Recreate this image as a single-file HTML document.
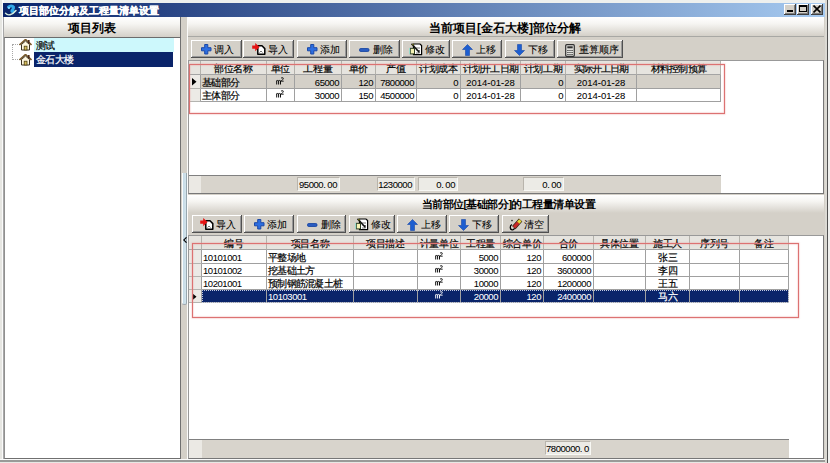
<!DOCTYPE html><html><head><meta charset="utf-8"><style>
*{margin:0;padding:0;box-sizing:border-box}
html,body{width:830px;height:463px;overflow:hidden;background:#d4d0c8;font-family:"Liberation Sans",sans-serif;font-size:10px;color:#000;-webkit-text-stroke-width:0.2px}
.hdr{-webkit-text-stroke-width:0}
.a{position:absolute}
.t{white-space:nowrap}
.wb{position:absolute;top:4px;width:12px;height:11px;background:#d4d0c8;box-shadow:inset -1px -1px #404040,inset 1px 1px #fff,inset -2px -2px #808080}
.hdr{position:absolute;background:linear-gradient(to bottom,#ffffff 0%,#f6f5f2 35%,#d4d0c8 100%);font-weight:bold;text-align:center;white-space:nowrap}
.btn{position:absolute;background:#d4d0c8;box-shadow:inset -1px -1px #505050,inset 1px 1px #fff,inset -2px -2px #989898;font-size:10px;white-space:nowrap;-webkit-text-stroke-width:0.05px}
.btn svg{position:absolute;left:0;top:0}
.btn span{position:absolute}
.cell{position:absolute;white-space:nowrap;overflow:hidden;font-size:10px}
.hc{background:#e6e4df;border-right:1px solid #b4b2ac;border-bottom:1px solid #a4a4a4;text-align:center}
.ic{background:#eceae6;border-right:1px solid #a0a0a0;border-bottom:1px solid #b4b4b0}
.dc{border-right:1px solid #a0a0a0;border-bottom:1px solid #a0a0a0;letter-spacing:-0.75px}
.num{letter-spacing:-0.45px;font-size:9.5px;-webkit-text-stroke-width:0.05px}
</style></head><body>
<div class="a" style="left:0px;top:0px;width:830px;height:3px;background:#eef0ee"></div>
<div class="a" style="left:0px;top:0px;width:2px;height:463px;background:#e6e6e2"></div>
<div class="a" style="left:2px;top:0px;width:2px;height:463px;background:#fafafa"></div>
<div class="a" style="left:0px;top:459px;width:830px;height:1px;background:#fafafa"></div>
<div class="a" style="left:0px;top:460px;width:830px;height:2px;background:#9a9a98"></div>
<div class="a" style="left:0px;top:462px;width:830px;height:1px;background:#e8e8e4"></div>
<div class="a" style="left:825px;top:0px;width:2px;height:463px;background:#dcdad4"></div>
<div class="a" style="left:827px;top:0px;width:1px;height:463px;background:#505050"></div>
<div class="a" style="left:828px;top:0px;width:2px;height:463px;background:#f0f0ee"></div>
<div class="a" style="left:3px;top:3px;width:822px;height:14px;background:linear-gradient(to right,#0a246a 0%,#a6caf0 100%)"></div>
<svg class="a" style="left:4px;top:4px" width="13" height="12" viewBox="0 0 13 12"><defs><filter id="bl" x="-50%" y="-50%" width="200%" height="200%"><feGaussianBlur stdDeviation="0.7"/></filter></defs><g filter="url(#bl)"><path d="M4.5 3 C6 1.5 8.5 1.5 9.5 3 C10 4.5 8.5 5.5 8 6.5 C7.5 7.5 8.5 8 9.5 7.5" stroke="#30a8e8" stroke-width="3" fill="none" stroke-linecap="round"/></g><circle cx="5" cy="4" r="1" fill="#90e0ff"/><path d="M1.5 9.2 C3.5 12 8 11.5 12 6.5" stroke="#d8efe0" stroke-width="1.4" fill="none" stroke-linecap="round"/></svg>
<div class="a t" style="left:19px;top:3px;width:200px;height:13px;color:#fff;font-weight:bold;font-size:10px;line-height:15px;-webkit-text-stroke-width:0.25px">项目部位分解及工程量清单设置</div>
<div class="wb" style="left:784px;top:4px;width:12px;height:11px;"><div class="a" style="left:3px;top:6px;width:6px;height:2px;background:#000"></div></div>
<div class="wb" style="left:797px;top:4px;width:12px;height:11px;"><div class="a" style="left:2px;top:1px;width:8px;height:7px;border:1px solid #000;border-top-width:2px"></div></div>
<div class="wb" style="left:811px;top:4px;width:12px;height:11px;"><svg class="a" style="left:2px;top:1px" width="8" height="8"><path d="M0.5 0.5 L7.5 7.5 M7.5 0.5 L0.5 7.5" stroke="#000" stroke-width="1.6"/></svg></div>
<div class="a" style="left:3px;top:17px;width:1px;height:442px;background:#a8a8a8"></div>
<div class="hdr" style="left:4px;top:17px;width:176px;height:20px;font-size:12px;line-height:22px">项目列表</div>
<div class="a" style="left:4px;top:37px;width:177px;height:422px;background:#fff;border:1px solid #909090;border-top-color:#6c6c6c;border-right-color:#707070;border-bottom-color:#707070"></div>
<div class="a" style="left:180px;top:17px;width:1px;height:21px;background:#707070"></div>
<div class="a" style="left:187px;top:17px;width:1px;height:442px;background:#fbfbfa"></div>
<div class="a" style="left:34px;top:38px;width:140px;height:14px;background:#cdf8fc"></div>
<div class="a" style="left:34px;top:52px;width:139px;height:15px;background:#0a246a"></div>
<div class="a t" style="left:36px;top:38px;width:60px;height:14px;font-size:10px;line-height:15px;letter-spacing:-0.6px">测试</div>
<div class="a t" style="left:36px;top:52px;width:60px;height:15px;font-size:10px;line-height:16px;color:#fff;letter-spacing:-0.6px">金石大楼</div>
<div class="a" style="left:12px;top:44px;width:1px;height:16px;border-left:1px dotted #a8a8a8"></div>
<div class="a" style="left:12px;top:44px;width:8px;height:1px;border-top:1px dotted #a8a8a8"></div>
<div class="a" style="left:12px;top:59px;width:8px;height:1px;border-top:1px dotted #a8a8a8"></div>
<svg class="a" style="left:19px;top:39px" width="13" height="12" viewBox="0 0 13 12"><path d="M0.5 6 L6.5 0.5 L12.5 6" stroke="#7a5a2a" stroke-width="1.6" fill="none"/><path d="M2.5 5.5 V11 H10.5 V5.5 L6.5 2 Z" fill="#fff8e0" stroke="#3a3020" stroke-width="1"/><rect x="5.2" y="7.2" width="2.8" height="3.8" fill="#d8c060" stroke="#504010" stroke-width="0.8"/><rect x="9" y="1" width="1.6" height="3.5" fill="#4a2a1a"/></svg>
<svg class="a" style="left:19px;top:54px" width="13" height="12" viewBox="0 0 13 12"><path d="M0.5 6 L6.5 0.5 L12.5 6" stroke="#7a5a2a" stroke-width="1.6" fill="none"/><path d="M2.5 5.5 V11 H10.5 V5.5 L6.5 2 Z" fill="#fff8e0" stroke="#3a3020" stroke-width="1"/><rect x="5.2" y="7.2" width="2.8" height="3.8" fill="#d8c060" stroke="#504010" stroke-width="0.8"/><rect x="9" y="1" width="1.6" height="3.5" fill="#4a2a1a"/></svg>
<div class="a" style="left:182px;top:173px;width:5px;height:132px;background:linear-gradient(to right,#fafcfd 0,#fafcfd 1px,#c4dae6 1px,#d4e4ec 100%);border-right:1px solid #98a8b0;border-bottom:1px solid #a0a8b0;border-radius:0 0 2px 2px"></div>
<svg class="a" style="left:183px;top:237px" width="4" height="6"><path d="M3.5 0.3 L0.7 3 L3.5 5.7" stroke="#000" stroke-width="1.1" fill="none"/></svg>
<div class="hdr" style="left:188px;top:17px;width:636px;height:20px;font-size:12px;line-height:22px;padding-right:2px;border-bottom:1px solid #a8a8a4">当前项目[金石大楼]部位分解</div>
<div class="hdr" style="left:188px;top:195px;width:636px;height:18px;font-size:10.5px;line-height:19px;padding-left:5px;letter-spacing:-0.5px">当前部位[基础部分]的工程量清单设置</div>
<div class="btn" style="left:191px;top:40px;width:51px;height:18px"><div class="a" style="left:10px;top:4px"><svg width="12" height="12" viewBox="0 0 12 12"><path d="M3.7 0.5 H6.8 V3.7 H10 V6.8 H6.8 V10 H3.7 V6.8 H0.5 V3.7 H3.7 Z" fill="#2d6ee0" stroke="#1a48a8" stroke-width="1" stroke-linejoin="round"/></svg></div><span style="left:23px;top:4px;line-height:12px">调入</span></div>
<div class="btn" style="left:243px;top:40px;width:51px;height:18px"><div class="a" style="left:9px;top:3px"><svg width="15" height="13" viewBox="0 0 15 13"><path d="M5.8 2.8 H10 L12.8 5.6 V11.3 H5.8 Z" fill="#fff" stroke="#000" stroke-width="1.5" stroke-linejoin="round"/><path d="M7.5 9.5 L9 8 L10.5 9.5" stroke="#555" stroke-width="0.8" fill="none"/><path d="M0.2 2.4 H3.2 V0 L7.6 4.1 L3.2 8.2 V5.8 H0.2 Z" fill="#e41414"/></svg></div><span style="left:25px;top:4px;line-height:12px">导入</span></div>
<div class="btn" style="left:297px;top:40px;width:50px;height:18px"><div class="a" style="left:10px;top:4px"><svg width="12" height="12" viewBox="0 0 12 12"><path d="M3.7 0.5 H6.8 V3.7 H10 V6.8 H6.8 V10 H3.7 V6.8 H0.5 V3.7 H3.7 Z" fill="#2d6ee0" stroke="#1a48a8" stroke-width="1" stroke-linejoin="round"/></svg></div><span style="left:23px;top:4px;line-height:12px">添加</span></div>
<div class="btn" style="left:349px;top:40px;width:51px;height:18px"><div class="a" style="left:10px;top:5px"><svg width="12" height="12" viewBox="0 0 12 12"><rect x="0.5" y="3.5" width="9.5" height="3" rx="1.2" fill="#2a5cc0" stroke="#1040a0" stroke-width="0.8"/></svg></div><span style="left:24px;top:4px;line-height:12px">删除</span></div>
<div class="btn" style="left:402px;top:40px;width:48px;height:18px"><div class="a" style="left:7px;top:3px"><svg width="14" height="13" viewBox="0 0 14 13"><path d="M4.5 1 H11 L12.6 2.6 V11.6 H4.5 Z" fill="#fff" stroke="#000" stroke-width="1.2"/><path d="M6.5 5 H11 M7.5 7.5 H11 M7 10 H10.5" stroke="#555" stroke-width="0.8"/><path d="M2.5 0.8 L10.5 9.5" stroke="#101010" stroke-width="1.6"/><path d="M3.5 1 L4.5 2.2" stroke="#707020" stroke-width="1.5"/><rect x="1.3" y="5.3" width="4.2" height="5.6" fill="#f6f2b4" stroke="#1a2a10" stroke-width="0.9"/><path d="M0.6 5 V11" stroke="#9adccc" stroke-width="1.1"/></svg></div><span style="left:23px;top:4px;line-height:12px">修改</span></div>
<div class="btn" style="left:452px;top:40px;width:50px;height:18px"><div class="a" style="left:10px;top:4px"><svg width="11" height="12" viewBox="0 0 11 12"><path d="M5.5 0.5 L10.5 5.5 H7.5 V11.5 H3.5 V5.5 H0.5 Z" fill="#1d5ed0" stroke="#1848a8" stroke-width="0.6"/></svg></div><span style="left:24px;top:4px;line-height:12px">上移</span></div>
<div class="btn" style="left:505px;top:40px;width:50px;height:18px"><div class="a" style="left:9px;top:4px"><svg width="11" height="12" viewBox="0 0 11 12"><path d="M5.5 11.5 L10.5 6.5 H7.5 V0.5 H3.5 V6.5 H0.5 Z" fill="#1d5ed0" stroke="#1848a8" stroke-width="0.6"/></svg></div><span style="left:23px;top:4px;line-height:12px">下移</span></div>
<div class="btn" style="left:557px;top:40px;width:66px;height:18px"><div class="a" style="left:8px;top:4px"><svg width="10" height="13" viewBox="0 0 10 13"><rect x="0.7" y="0.7" width="8.6" height="11.6" rx="1" fill="#e0e0dc" stroke="#303030" stroke-width="1.2"/><rect x="2.3" y="2.3" width="5.4" height="2" fill="#303030"/><path d="M2.3 6.5 H3.6 M4.4 6.5 H5.6 M6.4 6.5 H7.7 M2.3 8.5 H3.6 M4.4 8.5 H5.6 M6.4 8.5 H7.7 M2.3 10.5 H3.6 M4.4 10.5 H5.6 M6.4 10.5 H7.7" stroke="#303030" stroke-width="1.1"/></svg></div><span style="left:22px;top:4px;line-height:12px">重算顺序</span></div>
<div class="btn" style="left:192px;top:215px;width:50px;height:18px"><div class="a" style="left:8px;top:3px"><svg width="15" height="13" viewBox="0 0 15 13"><path d="M5.8 2.8 H10 L12.8 5.6 V11.3 H5.8 Z" fill="#fff" stroke="#000" stroke-width="1.5" stroke-linejoin="round"/><path d="M7.5 9.5 L9 8 L10.5 9.5" stroke="#555" stroke-width="0.8" fill="none"/><path d="M0.2 2.4 H3.2 V0 L7.6 4.1 L3.2 8.2 V5.8 H0.2 Z" fill="#e41414"/></svg></div><span style="left:24px;top:4px;line-height:12px">导入</span></div>
<div class="btn" style="left:244px;top:215px;width:50px;height:18px"><div class="a" style="left:10px;top:4px"><svg width="12" height="12" viewBox="0 0 12 12"><path d="M3.7 0.5 H6.8 V3.7 H10 V6.8 H6.8 V10 H3.7 V6.8 H0.5 V3.7 H3.7 Z" fill="#2d6ee0" stroke="#1a48a8" stroke-width="1" stroke-linejoin="round"/></svg></div><span style="left:23px;top:4px;line-height:12px">添加</span></div>
<div class="btn" style="left:297px;top:215px;width:49px;height:18px"><div class="a" style="left:10px;top:5px"><svg width="12" height="12" viewBox="0 0 12 12"><rect x="0.5" y="3.5" width="9.5" height="3" rx="1.2" fill="#2a5cc0" stroke="#1040a0" stroke-width="0.8"/></svg></div><span style="left:24px;top:4px;line-height:12px">删除</span></div>
<div class="btn" style="left:349px;top:215px;width:46px;height:18px"><div class="a" style="left:6px;top:3px"><svg width="14" height="13" viewBox="0 0 14 13"><path d="M4.5 1 H11 L12.6 2.6 V11.6 H4.5 Z" fill="#fff" stroke="#000" stroke-width="1.2"/><path d="M6.5 5 H11 M7.5 7.5 H11 M7 10 H10.5" stroke="#555" stroke-width="0.8"/><path d="M2.5 0.8 L10.5 9.5" stroke="#101010" stroke-width="1.6"/><path d="M3.5 1 L4.5 2.2" stroke="#707020" stroke-width="1.5"/><rect x="1.3" y="5.3" width="4.2" height="5.6" fill="#f6f2b4" stroke="#1a2a10" stroke-width="0.9"/><path d="M0.6 5 V11" stroke="#9adccc" stroke-width="1.1"/></svg></div><span style="left:22px;top:4px;line-height:12px">修改</span></div>
<div class="btn" style="left:397px;top:215px;width:50px;height:18px"><div class="a" style="left:10px;top:4px"><svg width="11" height="12" viewBox="0 0 11 12"><path d="M5.5 0.5 L10.5 5.5 H7.5 V11.5 H3.5 V5.5 H0.5 Z" fill="#1d5ed0" stroke="#1848a8" stroke-width="0.6"/></svg></div><span style="left:24px;top:4px;line-height:12px">上移</span></div>
<div class="btn" style="left:449px;top:215px;width:50px;height:18px"><div class="a" style="left:9px;top:4px"><svg width="11" height="12" viewBox="0 0 11 12"><path d="M5.5 11.5 L10.5 6.5 H7.5 V0.5 H3.5 V6.5 H0.5 Z" fill="#1d5ed0" stroke="#1848a8" stroke-width="0.6"/></svg></div><span style="left:23px;top:4px;line-height:12px">下移</span></div>
<div class="btn" style="left:502px;top:215px;width:47px;height:18px"><div class="a" style="left:7px;top:3px"><svg width="14" height="13" viewBox="0 0 14 13"><path d="M4.8 9.6 L11.6 2" stroke="#302010" stroke-width="4.6"/><path d="M5 9.4 L9.5 4.4" stroke="#c82828" stroke-width="3.2"/><path d="M9.3 4.6 L11.4 2.2" stroke="#e8d838" stroke-width="3.2"/><path d="M2.8 6.5 C0.6 8 0.8 11.5 3 11.8 C4.3 12 5.2 11 5.5 10.2" stroke="#000" stroke-width="1.3" fill="none"/><circle cx="3" cy="2.6" r="0.8" fill="#222"/></svg></div><span style="left:22px;top:4px;line-height:12px">清空</span></div>
<div class="a" style="left:188px;top:60px;width:636px;height:134px;background:#fff;border:1px solid #999;border-right-color:#777;border-bottom-color:#777"></div>
<div class="cell hc" style="left:189px;top:61px;width:12px;height:14px;line-height:13px;padding-top:1px;letter-spacing:-0.3px;text-overflow:clip"></div>
<div class="cell hc" style="left:201px;top:61px;width:66px;height:14px;line-height:13px;padding-top:1px;letter-spacing:-0.3px;text-overflow:clip">部位名称</div>
<div class="cell hc" style="left:267px;top:61px;width:28px;height:14px;line-height:13px;padding-top:1px;letter-spacing:-0.3px;text-overflow:clip">单位</div>
<div class="cell hc" style="left:295px;top:61px;width:47px;height:14px;line-height:13px;padding-top:1px;letter-spacing:-0.3px;text-overflow:clip">工程量</div>
<div class="cell hc" style="left:342px;top:61px;width:34px;height:14px;line-height:13px;padding-top:1px;letter-spacing:-0.3px;text-overflow:clip">单价</div>
<div class="cell hc" style="left:376px;top:61px;width:41px;height:14px;line-height:13px;padding-top:1px;letter-spacing:-0.3px;text-overflow:clip">产值</div>
<div class="cell hc" style="left:417px;top:61px;width:44px;height:14px;line-height:13px;padding-top:1px;letter-spacing:-0.3px;text-overflow:clip">计划成本</div>
<div class="cell hc" style="left:461px;top:61px;width:60px;height:14px;line-height:13px;padding-top:1px;letter-spacing:-0.85px;text-overflow:clip">计划开工日期</div>
<div class="cell hc" style="left:521px;top:61px;width:45px;height:14px;line-height:13px;padding-top:1px;letter-spacing:-0.3px;text-overflow:clip">计划工期</div>
<div class="cell hc" style="left:566px;top:61px;width:71px;height:14px;line-height:13px;padding-top:1px;letter-spacing:-0.85px;text-overflow:clip">实际开工日期</div>
<div class="cell hc" style="left:637px;top:61px;width:84px;height:14px;line-height:13px;padding-top:1px;letter-spacing:-0.85px;text-overflow:clip">材料控制预算</div>
<div class="cell ic" style="left:189px;top:75px;width:12px;height:14px"><svg class="a" style="left:3px;top:3px" width="5" height="8"><path d="M0 0 L4.5 3.8 L0 7.6 Z" fill="#000"/></svg></div>
<div class="cell dc" style="left:201px;top:75px;width:66px;height:14px;line-height:15px;background:#d4d0c8;color:#000;text-align:left;padding-left:1px">基础部分</div>
<div class="cell dc" style="left:267px;top:75px;width:28px;height:14px;line-height:15px;background:#d4d0c8;color:#000;text-align:center;"><svg width="8" height="8" viewBox="0 0 8 8" style="vertical-align:1px;margin-right:1px"><path d="M0.7 7.5 V3.5 M0.7 4 Q1.7 3 2.6 3.8 V7.5 M2.6 4 Q3.6 3 4.5 3.8 V7.5" stroke="currentColor" stroke-width="0.95" fill="none"/><path d="M5 1.2 Q6.2 0 7.3 1 Q7.6 2 5.1 4.2 H7.7" stroke="currentColor" stroke-width="0.85" fill="none"/></svg></div>
<div class="cell dc num" style="left:295px;top:75px;width:47px;height:14px;line-height:15px;background:#d4d0c8;color:#000;text-align:right;padding-right:2px">65000</div>
<div class="cell dc num" style="left:342px;top:75px;width:34px;height:14px;line-height:15px;background:#d4d0c8;color:#000;text-align:right;padding-right:2px">120</div>
<div class="cell dc num" style="left:376px;top:75px;width:41px;height:14px;line-height:15px;background:#d4d0c8;color:#000;text-align:right;padding-right:2px">7800000</div>
<div class="cell dc num" style="left:417px;top:75px;width:44px;height:14px;line-height:15px;background:#d4d0c8;color:#000;text-align:right;padding-right:2px">0</div>
<div class="cell dc num" style="left:461px;top:75px;width:60px;height:14px;line-height:15px;background:#d4d0c8;color:#000;text-align:center;"><span style="letter-spacing:0">2014-01-28</span></div>
<div class="cell dc num" style="left:521px;top:75px;width:45px;height:14px;line-height:15px;background:#d4d0c8;color:#000;text-align:right;padding-right:2px">0</div>
<div class="cell dc num" style="left:566px;top:75px;width:71px;height:14px;line-height:15px;background:#d4d0c8;color:#000;text-align:center;"><span style="letter-spacing:0">2014-01-28</span></div>
<div class="cell dc" style="left:637px;top:75px;width:84px;height:14px;line-height:15px;background:#d4d0c8;color:#000;text-align:left;padding-left:1px"></div>
<div class="cell ic" style="left:189px;top:89px;width:12px;height:13px"></div>
<div class="cell dc" style="left:201px;top:89px;width:66px;height:13px;line-height:14px;background:#fff;color:#000;text-align:left;padding-left:1px">主体部分</div>
<div class="cell dc" style="left:267px;top:89px;width:28px;height:13px;line-height:14px;background:#fff;color:#000;text-align:center;"><svg width="8" height="8" viewBox="0 0 8 8" style="vertical-align:1px;margin-right:1px"><path d="M0.7 7.5 V3.5 M0.7 4 Q1.7 3 2.6 3.8 V7.5 M2.6 4 Q3.6 3 4.5 3.8 V7.5" stroke="currentColor" stroke-width="0.95" fill="none"/><path d="M5 1.2 Q6.2 0 7.3 1 Q7.6 2 5.1 4.2 H7.7" stroke="currentColor" stroke-width="0.85" fill="none"/></svg></div>
<div class="cell dc num" style="left:295px;top:89px;width:47px;height:13px;line-height:14px;background:#fff;color:#000;text-align:right;padding-right:2px">30000</div>
<div class="cell dc num" style="left:342px;top:89px;width:34px;height:13px;line-height:14px;background:#fff;color:#000;text-align:right;padding-right:2px">150</div>
<div class="cell dc num" style="left:376px;top:89px;width:41px;height:13px;line-height:14px;background:#fff;color:#000;text-align:right;padding-right:2px">4500000</div>
<div class="cell dc num" style="left:417px;top:89px;width:44px;height:13px;line-height:14px;background:#fff;color:#000;text-align:right;padding-right:2px">0</div>
<div class="cell dc num" style="left:461px;top:89px;width:60px;height:13px;line-height:14px;background:#fff;color:#000;text-align:center;"><span style="letter-spacing:0">2014-01-28</span></div>
<div class="cell dc num" style="left:521px;top:89px;width:45px;height:13px;line-height:14px;background:#fff;color:#000;text-align:right;padding-right:2px">0</div>
<div class="cell dc num" style="left:566px;top:89px;width:71px;height:13px;line-height:14px;background:#fff;color:#000;text-align:center;"><span style="letter-spacing:0">2014-01-28</span></div>
<div class="cell dc" style="left:637px;top:89px;width:84px;height:13px;line-height:14px;background:#fff;color:#000;text-align:left;padding-left:1px"></div>
<div class="a" style="left:189px;top:175px;width:12px;height:18px;background:#ebe9e4;border-top:1px solid #808080"></div>
<div class="a" style="left:201px;top:175px;width:520px;height:18px;background:#d8d4cc;border-top:1px solid #808080"></div>
<div class="a t num" style="left:297px;top:177px;width:43px;height:14px;background:#ecebe6;border:1px solid #b8b4ac;border-right-color:#f8f8f4;border-bottom-color:#f8f8f4;text-align:right;padding-right:2px;font-size:9.5px;line-height:14px">95000.<span style="display:inline-block;width:2px"></span>00</div>
<div class="a t num" style="left:377px;top:177px;width:38px;height:14px;background:#ecebe6;border:1px solid #b8b4ac;border-right-color:#f8f8f4;border-bottom-color:#f8f8f4;text-align:right;padding-right:2px;font-size:9.5px;line-height:14px">1230000</div>
<div class="a t num" style="left:418px;top:177px;width:40px;height:14px;background:#ecebe6;border:1px solid #b8b4ac;border-right-color:#f8f8f4;border-bottom-color:#f8f8f4;text-align:right;padding-right:2px;font-size:9.5px;line-height:14px">0.<span style="display:inline-block;width:2px"></span>00</div>
<div class="a t num" style="left:523px;top:177px;width:41px;height:14px;background:#ecebe6;border:1px solid #b8b4ac;border-right-color:#f8f8f4;border-bottom-color:#f8f8f4;text-align:right;padding-right:2px;font-size:9.5px;line-height:14px">0.<span style="display:inline-block;width:2px"></span>00</div>
<div class="a" style="left:188px;top:235px;width:636px;height:224px;background:#fff;border:1px solid #999;border-right-color:#777;border-bottom-color:#777"></div>
<div class="cell hc" style="left:189px;top:236px;width:13px;height:14px;line-height:13px;padding-top:1px;letter-spacing:-0.3px;text-overflow:clip"></div>
<div class="cell hc" style="left:202px;top:236px;width:65px;height:14px;line-height:13px;padding-top:1px;letter-spacing:-0.3px;text-overflow:clip">编号</div>
<div class="cell hc" style="left:267px;top:236px;width:87px;height:14px;line-height:13px;padding-top:1px;letter-spacing:-0.3px;text-overflow:clip">项目名称</div>
<div class="cell hc" style="left:354px;top:236px;width:64px;height:14px;line-height:13px;padding-top:1px;letter-spacing:-0.3px;text-overflow:clip">项目描述</div>
<div class="cell hc" style="left:418px;top:236px;width:43px;height:14px;line-height:13px;padding-top:1px;letter-spacing:-0.3px;text-overflow:clip">计量单位</div>
<div class="cell hc" style="left:461px;top:236px;width:40px;height:14px;line-height:13px;padding-top:1px;letter-spacing:-0.3px;text-overflow:clip">工程量</div>
<div class="cell hc" style="left:501px;top:236px;width:43px;height:14px;line-height:13px;padding-top:1px;letter-spacing:-0.3px;text-overflow:clip">综合单价</div>
<div class="cell hc" style="left:544px;top:236px;width:50px;height:14px;line-height:13px;padding-top:1px;letter-spacing:-0.3px;text-overflow:clip">合价</div>
<div class="cell hc" style="left:594px;top:236px;width:52px;height:14px;line-height:13px;padding-top:1px;letter-spacing:-0.3px;text-overflow:clip">具体位置</div>
<div class="cell hc" style="left:646px;top:236px;width:44px;height:14px;line-height:13px;padding-top:1px;letter-spacing:-0.3px;text-overflow:clip">施工人</div>
<div class="cell hc" style="left:690px;top:236px;width:50px;height:14px;line-height:13px;padding-top:1px;letter-spacing:-0.3px;text-overflow:clip">序列号</div>
<div class="cell hc" style="left:740px;top:236px;width:49px;height:14px;line-height:13px;padding-top:1px;letter-spacing:-0.3px;text-overflow:clip">备注</div>
<div class="cell ic" style="left:189px;top:250px;width:13px;height:14px"></div>
<div class="cell dc num" style="left:202px;top:250px;width:65px;height:14px;line-height:15px;background:#fff;color:#000;text-align:left;padding-left:1px">10101001</div>
<div class="cell dc" style="left:267px;top:250px;width:87px;height:14px;line-height:15px;background:#fff;color:#000;text-align:left;padding-left:1px">平整场地</div>
<div class="cell dc" style="left:354px;top:250px;width:64px;height:14px;line-height:15px;background:#fff;color:#000;text-align:left;padding-left:1px"></div>
<div class="cell dc" style="left:418px;top:250px;width:43px;height:14px;line-height:15px;background:#fff;color:#000;text-align:center;"><svg width="8" height="8" viewBox="0 0 8 8" style="vertical-align:1px;margin-right:1px"><path d="M0.7 7.5 V3.5 M0.7 4 Q1.7 3 2.6 3.8 V7.5 M2.6 4 Q3.6 3 4.5 3.8 V7.5" stroke="currentColor" stroke-width="0.95" fill="none"/><path d="M5 1.2 Q6.2 0 7.3 1 Q7.6 2 5.1 4.2 H7.7" stroke="currentColor" stroke-width="0.85" fill="none"/></svg></div>
<div class="cell dc num" style="left:461px;top:250px;width:40px;height:14px;line-height:15px;background:#fff;color:#000;text-align:right;padding-right:2px">5000</div>
<div class="cell dc num" style="left:501px;top:250px;width:43px;height:14px;line-height:15px;background:#fff;color:#000;text-align:right;padding-right:2px">120</div>
<div class="cell dc num" style="left:544px;top:250px;width:50px;height:14px;line-height:15px;background:#fff;color:#000;text-align:right;padding-right:2px">600000</div>
<div class="cell dc" style="left:594px;top:250px;width:52px;height:14px;line-height:15px;background:#fff;color:#000;text-align:left;padding-left:1px"></div>
<div class="cell dc" style="left:646px;top:250px;width:44px;height:14px;line-height:15px;background:#fff;color:#000;text-align:center;">张三</div>
<div class="cell dc" style="left:690px;top:250px;width:50px;height:14px;line-height:15px;background:#fff;color:#000;text-align:left;padding-left:1px"></div>
<div class="cell dc" style="left:740px;top:250px;width:49px;height:14px;line-height:15px;background:#fff;color:#000;text-align:left;padding-left:1px"></div>
<div class="cell ic" style="left:189px;top:264px;width:13px;height:13px"></div>
<div class="cell dc num" style="left:202px;top:264px;width:65px;height:13px;line-height:14px;background:#fff;color:#000;text-align:left;padding-left:1px">10101002</div>
<div class="cell dc" style="left:267px;top:264px;width:87px;height:13px;line-height:14px;background:#fff;color:#000;text-align:left;padding-left:1px">挖基础土方</div>
<div class="cell dc" style="left:354px;top:264px;width:64px;height:13px;line-height:14px;background:#fff;color:#000;text-align:left;padding-left:1px"></div>
<div class="cell dc" style="left:418px;top:264px;width:43px;height:13px;line-height:14px;background:#fff;color:#000;text-align:center;"><svg width="8" height="8" viewBox="0 0 8 8" style="vertical-align:1px;margin-right:1px"><path d="M0.7 7.5 V3.5 M0.7 4 Q1.7 3 2.6 3.8 V7.5 M2.6 4 Q3.6 3 4.5 3.8 V7.5" stroke="currentColor" stroke-width="0.95" fill="none"/><path d="M5 1.2 Q6.2 0 7.3 1 Q7.6 2 5.1 4.2 H7.7" stroke="currentColor" stroke-width="0.85" fill="none"/></svg></div>
<div class="cell dc num" style="left:461px;top:264px;width:40px;height:13px;line-height:14px;background:#fff;color:#000;text-align:right;padding-right:2px">30000</div>
<div class="cell dc num" style="left:501px;top:264px;width:43px;height:13px;line-height:14px;background:#fff;color:#000;text-align:right;padding-right:2px">120</div>
<div class="cell dc num" style="left:544px;top:264px;width:50px;height:13px;line-height:14px;background:#fff;color:#000;text-align:right;padding-right:2px">3600000</div>
<div class="cell dc" style="left:594px;top:264px;width:52px;height:13px;line-height:14px;background:#fff;color:#000;text-align:left;padding-left:1px"></div>
<div class="cell dc" style="left:646px;top:264px;width:44px;height:13px;line-height:14px;background:#fff;color:#000;text-align:center;">李四</div>
<div class="cell dc" style="left:690px;top:264px;width:50px;height:13px;line-height:14px;background:#fff;color:#000;text-align:left;padding-left:1px"></div>
<div class="cell dc" style="left:740px;top:264px;width:49px;height:13px;line-height:14px;background:#fff;color:#000;text-align:left;padding-left:1px"></div>
<div class="cell ic" style="left:189px;top:277px;width:13px;height:13px"></div>
<div class="cell dc num" style="left:202px;top:277px;width:65px;height:13px;line-height:14px;background:#fff;color:#000;text-align:left;padding-left:1px">10201001</div>
<div class="cell dc" style="left:267px;top:277px;width:87px;height:13px;line-height:14px;background:#fff;color:#000;text-align:left;padding-left:1px">预制钢筋混凝土桩</div>
<div class="cell dc" style="left:354px;top:277px;width:64px;height:13px;line-height:14px;background:#fff;color:#000;text-align:left;padding-left:1px"></div>
<div class="cell dc" style="left:418px;top:277px;width:43px;height:13px;line-height:14px;background:#fff;color:#000;text-align:center;"><svg width="8" height="8" viewBox="0 0 8 8" style="vertical-align:1px;margin-right:1px"><path d="M0.7 7.5 V3.5 M0.7 4 Q1.7 3 2.6 3.8 V7.5 M2.6 4 Q3.6 3 4.5 3.8 V7.5" stroke="currentColor" stroke-width="0.95" fill="none"/><path d="M5 1.2 Q6.2 0 7.3 1 Q7.6 2 5.1 4.2 H7.7" stroke="currentColor" stroke-width="0.85" fill="none"/></svg></div>
<div class="cell dc num" style="left:461px;top:277px;width:40px;height:13px;line-height:14px;background:#fff;color:#000;text-align:right;padding-right:2px">10000</div>
<div class="cell dc num" style="left:501px;top:277px;width:43px;height:13px;line-height:14px;background:#fff;color:#000;text-align:right;padding-right:2px">120</div>
<div class="cell dc num" style="left:544px;top:277px;width:50px;height:13px;line-height:14px;background:#fff;color:#000;text-align:right;padding-right:2px">1200000</div>
<div class="cell dc" style="left:594px;top:277px;width:52px;height:13px;line-height:14px;background:#fff;color:#000;text-align:left;padding-left:1px"></div>
<div class="cell dc" style="left:646px;top:277px;width:44px;height:13px;line-height:14px;background:#fff;color:#000;text-align:center;">王五</div>
<div class="cell dc" style="left:690px;top:277px;width:50px;height:13px;line-height:14px;background:#fff;color:#000;text-align:left;padding-left:1px"></div>
<div class="cell dc" style="left:740px;top:277px;width:49px;height:13px;line-height:14px;background:#fff;color:#000;text-align:left;padding-left:1px"></div>
<div class="cell ic" style="left:189px;top:290px;width:13px;height:13px"><svg class="a" style="left:3px;top:3px" width="5" height="8"><path d="M0 0 L4.5 3.8 L0 7.6 Z" fill="#000"/></svg></div>
<div class="cell dc" style="left:202px;top:290px;width:65px;height:13px;line-height:14px;background:#0a246a;color:#fff;text-align:left;padding-left:1px"></div>
<div class="cell dc num" style="left:267px;top:290px;width:87px;height:13px;line-height:14px;background:#0a246a;color:#fff;text-align:left;padding-left:1px">10103001</div>
<div class="cell dc" style="left:354px;top:290px;width:64px;height:13px;line-height:14px;background:#0a246a;color:#fff;text-align:left;padding-left:1px"></div>
<div class="cell dc" style="left:418px;top:290px;width:43px;height:13px;line-height:14px;background:#0a246a;color:#fff;text-align:center;"><svg width="8" height="8" viewBox="0 0 8 8" style="vertical-align:1px;margin-right:1px"><path d="M0.7 7.5 V3.5 M0.7 4 Q1.7 3 2.6 3.8 V7.5 M2.6 4 Q3.6 3 4.5 3.8 V7.5" stroke="currentColor" stroke-width="0.95" fill="none"/><path d="M5 1.2 Q6.2 0 7.3 1 Q7.6 2 5.1 4.2 H7.7" stroke="currentColor" stroke-width="0.85" fill="none"/></svg></div>
<div class="cell dc num" style="left:461px;top:290px;width:40px;height:13px;line-height:14px;background:#0a246a;color:#fff;text-align:right;padding-right:2px">20000</div>
<div class="cell dc num" style="left:501px;top:290px;width:43px;height:13px;line-height:14px;background:#0a246a;color:#fff;text-align:right;padding-right:2px">120</div>
<div class="cell dc num" style="left:544px;top:290px;width:50px;height:13px;line-height:14px;background:#0a246a;color:#fff;text-align:right;padding-right:2px">2400000</div>
<div class="cell dc" style="left:594px;top:290px;width:52px;height:13px;line-height:14px;background:#0a246a;color:#fff;text-align:left;padding-left:1px"></div>
<div class="cell dc" style="left:646px;top:290px;width:44px;height:13px;line-height:14px;background:#0a246a;color:#fff;text-align:center;">马六</div>
<div class="cell dc" style="left:690px;top:290px;width:50px;height:13px;line-height:14px;background:#0a246a;color:#fff;text-align:left;padding-left:1px"></div>
<div class="cell dc" style="left:740px;top:290px;width:49px;height:13px;line-height:14px;background:#0a246a;color:#fff;text-align:left;padding-left:1px"></div>
<div class="a" style="left:202px;top:290px;width:587px;height:13px;border:1px dotted #c0c8e0"></div>
<div class="a" style="left:189px;top:439px;width:13px;height:19px;background:#ebe9e4;border-top:1px solid #808080"></div>
<div class="a" style="left:202px;top:439px;width:587px;height:19px;background:#d8d4cc;border-top:1px solid #808080"></div>
<div class="a t num" style="left:545px;top:441px;width:46px;height:14px;background:#ecebe6;border:1px solid #b8b4ac;border-right-color:#f8f8f4;border-bottom-color:#f8f8f4;text-align:right;padding-right:2px;font-size:9.5px;line-height:14px">7800000.<span style="display:inline-block;width:2px"></span>0</div>
<div class="a" style="left:189px;top:64px;width:536px;height:50px;border:1px solid #dc7272;box-shadow:0 0 1px 0.4px rgba(235,150,150,0.5),inset 0 0 1px 0.4px rgba(235,150,150,0.5)"></div>
<div class="a" style="left:192px;top:243px;width:607px;height:75px;border:1px solid #dc7272;box-shadow:0 0 1px 0.4px rgba(235,150,150,0.5),inset 0 0 1px 0.4px rgba(235,150,150,0.5)"></div>
</body></html>
